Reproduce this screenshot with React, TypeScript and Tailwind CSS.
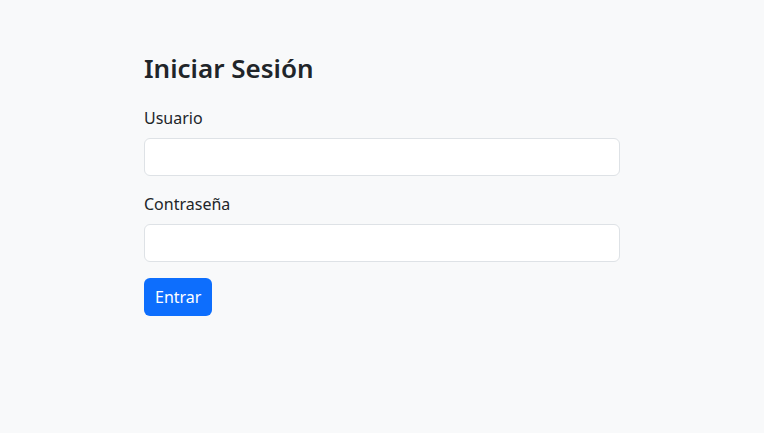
export default function App() {
  return (
    <div className="min-h-[433px] bg-[#f8f9fa] text-[#212529] font-['Noto_Sans',sans-serif]">
      <div className="max-w-[500px] mx-auto px-3 pt-[51px]">
        <h2 className="text-[26px] leading-[34px] font-semibold mb-[21px]">Iniciar Sesión</h2>
        <form onSubmit={(e) => e.preventDefault()}>
          <div className="mb-4">
            <label className="block text-base leading-6 mb-2">Usuario</label>
            <input
              type="text"
              className="block w-full h-[38px] px-3 bg-white border border-[#dee2e6] rounded-md outline-none"
            />
          </div>
          <div className="mb-4">
            <label className="block text-base leading-6 mb-2">Contraseña</label>
            <input
              type="password"
              className="block w-full h-[38px] px-3 bg-white border border-[#dee2e6] rounded-md outline-none"
            />
          </div>
          <button
            type="submit"
            className="h-[38px] px-[11px] bg-[#0d6efd] text-white text-base leading-6 rounded-md"
          >
            Entrar
          </button>
        </form>
      </div>
    </div>
  );
}
